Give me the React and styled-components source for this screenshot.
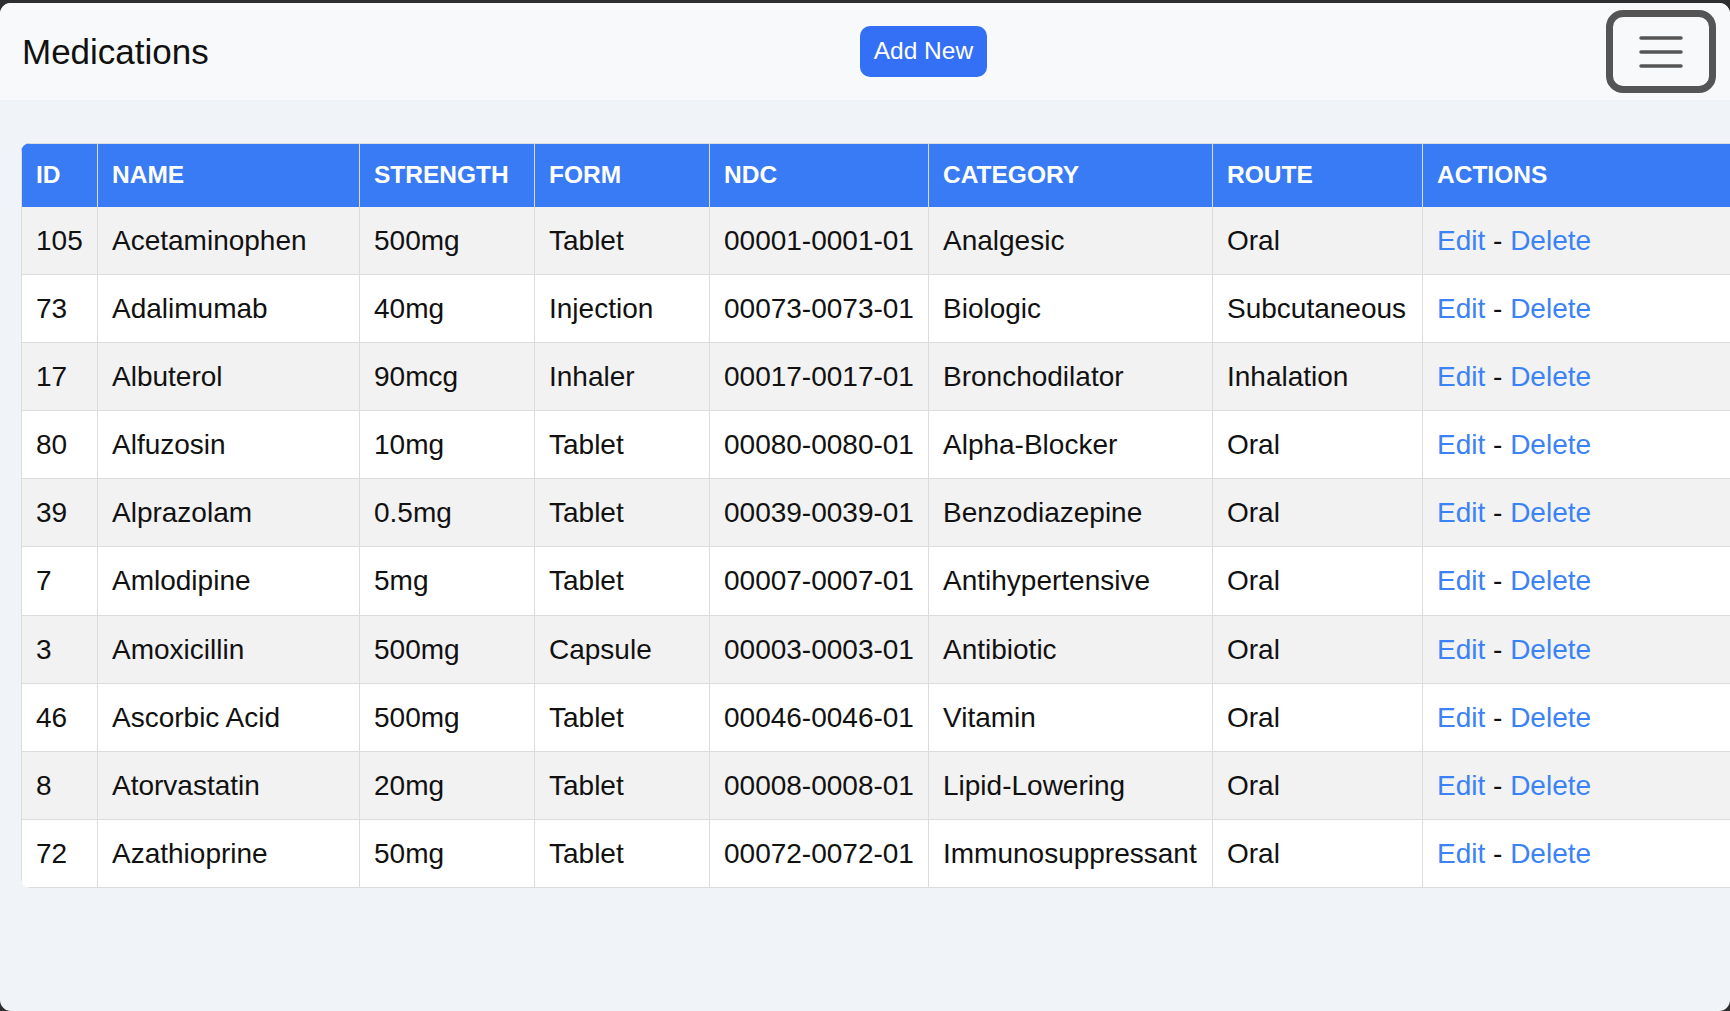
import React from "react";
import styled, { createGlobalStyle } from "styled-components";

const GlobalStyle = createGlobalStyle`
  html, body {
    margin: 0;
    padding: 0;
    background: #2e2e2e;
    overflow: hidden;
    font-family: "Liberation Sans", Arial, sans-serif;
  }
  * { box-sizing: border-box; }
`;

const Window = styled.div`
  margin-top: 3px;
  height: 1008px;
  border-radius: 11px;
  background: #f0f3f8;
  overflow: hidden;
  display: flex;
  flex-direction: column;
`;

const TopBar = styled.header`
  height: 97px;
  flex: none;
  background: #f8f9fa;
  display: flex;
  align-items: center;
  justify-content: space-between;
  padding: 0 14px 0 22px;
`;

const Title = styled.h1`
  margin: 0;
  font-size: 35px;
  font-weight: 400;
  color: #111;
  line-height: 40px;
`;

const AddButton = styled.button`
  margin-left: 32px;
  background: #3470f5;
  color: #fff;
  border: none;
  border-radius: 10px;
  font-family: inherit;
  font-size: 24.5px;
  line-height: 28px;
  padding: 11px 14px 12px;
  cursor: pointer;
`;

const MenuButton = styled.button`
  width: 110px;
  height: 83px;
  border: 7px solid #555;
  border-radius: 17px;
  background: transparent;
  display: grid;
  place-items: center;
  padding: 0;
  cursor: pointer;
`;

const Main = styled.main`
  flex: 1;
  overflow: hidden;
  padding: 43px 0 0 21px;
`;

const TableCard = styled.div`
  width: max-content;
  border-radius: 9px 0 0 9px;
  overflow: hidden;
  background: #fff;
`;

const Table = styled.table`
  border-collapse: separate;
  border-spacing: 0;
  table-layout: fixed;
  width: 1732px;
`;

const HeadCell = styled.th`
  background: #387bf5;
  color: #fff;
  font-size: 24.5px;
  font-weight: 700;
  text-transform: uppercase;
  text-align: left;
  line-height: 28px;
  padding: 17px 14px 18px;
  border-top: 1px solid #dcdcdc;
  border-right: 1px solid #dcdcdc;
  &:first-child { border-left: 1px solid #dcdcdc; }
`;

const Row = styled.tr`
  background: ${(p) => (p.$striped ? "#f2f2f2" : "#ffffff")};
`;

const Cell = styled.td`
  font-size: 28px;
  line-height: 33.1px;
  color: #111;
  padding: 17px 14px;
  white-space: nowrap;
  border-bottom: 1px solid #dcdcdc;
  border-right: 1px solid #dcdcdc;
  &:first-child { border-left: 1px solid #dcdcdc; }
`;

const ActionLink = styled.a`
  color: #3b82f6;
  text-decoration: none;
  cursor: pointer;
`;

const columns = [
  { key: "id", label: "ID", width: 77 },
  { key: "name", label: "Name", width: 262 },
  { key: "strength", label: "Strength", width: 175 },
  { key: "form", label: "Form", width: 175 },
  { key: "ndc", label: "NDC", width: 219 },
  { key: "category", label: "Category", width: 284 },
  { key: "route", label: "Route", width: 210 },
  { key: "actions", label: "Actions", width: 330 },
];

const meds = [
  [105, "Acetaminophen", "500mg", "Tablet", "00001-0001-01", "Analgesic", "Oral"],
  [73, "Adalimumab", "40mg", "Injection", "00073-0073-01", "Biologic", "Subcutaneous"],
  [17, "Albuterol", "90mcg", "Inhaler", "00017-0017-01", "Bronchodilator", "Inhalation"],
  [80, "Alfuzosin", "10mg", "Tablet", "00080-0080-01", "Alpha-Blocker", "Oral"],
  [39, "Alprazolam", "0.5mg", "Tablet", "00039-0039-01", "Benzodiazepine", "Oral"],
  [7, "Amlodipine", "5mg", "Tablet", "00007-0007-01", "Antihypertensive", "Oral"],
  [3, "Amoxicillin", "500mg", "Capsule", "00003-0003-01", "Antibiotic", "Oral"],
  [46, "Ascorbic Acid", "500mg", "Tablet", "00046-0046-01", "Vitamin", "Oral"],
  [8, "Atorvastatin", "20mg", "Tablet", "00008-0008-01", "Lipid-Lowering", "Oral"],
  [72, "Azathioprine", "50mg", "Tablet", "00072-0072-01", "Immunosuppressant", "Oral"],
];

function HamburgerIcon() {
  return (
    <svg width="46" height="34" viewBox="0 0 46 34" aria-hidden="true">
      <g stroke="#555" strokeWidth="3.5" strokeLinecap="round">
        <line x1="3" y1="3" x2="43" y2="3" />
        <line x1="3" y1="17" x2="43" y2="17" />
        <line x1="3" y1="31" x2="43" y2="31" />
      </g>
    </svg>
  );
}

export default function App() {
  return (
    <>
      <GlobalStyle />
      <Window>
        <TopBar>
          <Title>Medications</Title>
          <AddButton>Add New</AddButton>
          <MenuButton aria-label="Menu">
            <HamburgerIcon />
          </MenuButton>
        </TopBar>
        <Main>
          <TableCard>
            <Table>
              <colgroup>
                {columns.map((c) => (
                  <col key={c.key} style={{ width: c.width }} />
                ))}
              </colgroup>
              <thead>
                <tr>
                  {columns.map((c) => (
                    <HeadCell key={c.key}>{c.label}</HeadCell>
                  ))}
                </tr>
              </thead>
              <tbody>
                {meds.map((m, i) => (
                  <Row key={m[0]} $striped={i % 2 === 0}>
                    {m.map((v, j) => (
                      <Cell key={j}>{v}</Cell>
                    ))}
                    <Cell>
                      <ActionLink>Edit</ActionLink> - <ActionLink>Delete</ActionLink>
                    </Cell>
                  </Row>
                ))}
              </tbody>
            </Table>
          </TableCard>
        </Main>
      </Window>
    </>
  );
}
